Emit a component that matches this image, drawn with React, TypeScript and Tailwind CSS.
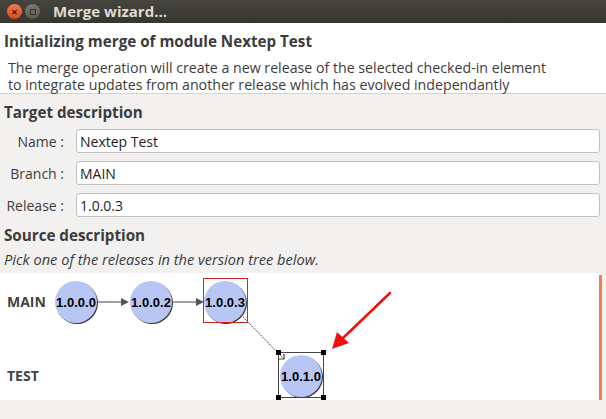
import React from "react";

const UI = { fontFamily: '"Open Sans", "Noto Sans", sans-serif' };

function Node({ cx, cy, label }: { cx: number; cy: number; label: string }) {
  return (
    <g>
      <circle cx={cx + 1} cy={cy + 1} r={21} fill="#3a3a3a" />
      <circle cx={cx} cy={cy} r={21} fill="#b8c6f3" />
      <text
        x={cx}
        y={cy + 4.5}
        textAnchor="middle"
        fontFamily='"Liberation Sans", Arial, sans-serif'
        fontWeight="bold"
        fontSize="13"
        fill="#000"
      >
        {label}
      </text>
    </g>
  );
}

function Row({ label, value }: { label: string; value: string }) {
  return (
    <div className="flex items-center h-[24px]">
      <div className="w-[64px] text-right text-[14px] text-[#3c3c3c] whitespace-nowrap">{label}</div>
      <div className="ml-[12px] flex-1 h-[24px] bg-white border border-[#c2c0bd] rounded-[3px] flex items-center px-[3px] text-[14px] text-[#1e1e1e] mr-[6px]">
        {value}
      </div>
    </div>
  );
}

export default function App() {
  return (
    <div className="w-[606px] h-[419px] bg-[#f2f1f0] overflow-hidden flex flex-col" style={UI}>
      {/* Title bar */}
      <div className="h-[23px] bg-gradient-to-b from-[#45443f] to-[#36352f] flex items-center shrink-0">
        <div className="ml-[7px] w-[15px] h-[15px] rounded-full bg-gradient-to-b from-[#f27a4f] to-[#d9481b] flex items-center justify-center text-[#3c1a0e] text-[11px] leading-none font-bold">
          ×
        </div>
        <div className="ml-[3px] w-[15px] h-[15px] rounded-full bg-gradient-to-b from-[#7a7974] to-[#5b5a55] flex items-center justify-center">
          <div className="w-[6px] h-[6px] border border-[#35342f]" />
        </div>
        <div className="ml-[13px] text-[15px] font-bold text-[#dfdbd2] leading-none">Merge wizard...</div>
      </div>

      {/* Header */}
      <div className="h-[71px] bg-white border-b border-[#d6d4d1] shrink-0 pt-[8px]">
        <div className="pl-[4px] text-[15.2px] font-bold text-[#3c3c3c] leading-[20px] whitespace-nowrap">Initializing merge of module Nextep Test</div>
        <div className="pl-[8px] pt-[8px] text-[14.2px] text-[#3c3c3c] leading-[17px] whitespace-nowrap">
          The merge operation will create a new release of the selected checked-in element
          <br />
          to integrate updates from another release which has evolved independantly
        </div>
      </div>

      {/* Target description */}
      <div className="pl-[4px] pt-[8px] text-[15.2px] font-bold text-[#3c3c3c] leading-[20px]">Target description</div>
      <div className="flex flex-col gap-[8px] mt-[7px]">
        <Row label="Name :" value="Nextep Test" />
        <Row label="Branch :" value="MAIN" />
        <Row label="Release :" value="1.0.0.3" />
      </div>

      {/* Source description */}
      <div className="pl-[4px] pt-[8px] text-[15.2px] font-bold text-[#3c3c3c] leading-[20px]">Source description</div>
      <div className="pl-[4px] pt-[4px] text-[14.6px] italic text-[#3c3c3c] leading-[20px] whitespace-nowrap">
        Pick one of the releases in the version tree below.
      </div>

      {/* Canvas */}
      <div className="relative mt-[4px] w-[602px] h-[127px] bg-white shrink-0">
        <svg className="absolute left-0 top-0" width="602" height="127" viewBox="0 0 602 127">
          <text x="7" y="34" fontFamily='"Open Sans", sans-serif' fontWeight="bold" fontSize="14" fill="#444">MAIN</text>
          <text x="7" y="108" fontFamily='"Open Sans", sans-serif' fontWeight="bold" fontSize="14" fill="#444">TEST</text>

          {/* arrows main branch */}
          <line x1="97" y1="29" x2="122" y2="29" stroke="#444" strokeWidth="1" />
          <polygon points="121,25 129,29 121,33" fill="#555" />
          <line x1="172" y1="29" x2="197" y2="29" stroke="#444" strokeWidth="1" />
          <polygon points="196,25 204,29 196,33" fill="#555" />

          {/* diagonal */}
          <line x1="243" y1="44" x2="284" y2="86" stroke="#333" strokeWidth="1" strokeDasharray="1.5 1" />
          <polyline points="279,86 284,86 284,81" fill="none" stroke="#444" strokeWidth="1.2" />

          <Node cx={76} cy={29} label="1.0.0.0" />
          <Node cx={151} cy={29} label="1.0.0.2" />
          <Node cx={225} cy={29} label="1.0.0.3" />
          <rect x="203.5" y="5.5" width="44" height="44" fill="none" stroke="#d42020" strokeWidth="1" />

          <Node cx={301} cy={103} label="1.0.1.0" />
          <rect x="278.5" y="79.5" width="45" height="45" fill="none" stroke="#444" strokeWidth="1" />
          <rect x="276" y="77" width="5" height="5" fill="#000" />
          <rect x="321" y="77" width="5" height="5" fill="#000" />
          <rect x="276" y="122" width="5" height="5" fill="#000" />
          <rect x="321" y="122" width="5" height="5" fill="#000" />

          {/* red annotation arrow */}
          <line x1="390" y1="20" x2="342" y2="66" stroke="#f01010" strokeWidth="2.5" strokeLinecap="round" />
          <polygon points="332,76 337,59 349,70" fill="#f01010" />
        </svg>
        <div className="absolute right-0 top-[2px] bottom-0 w-[3px] bg-[#f07f4e]" />
      </div>
    </div>
  );
}
